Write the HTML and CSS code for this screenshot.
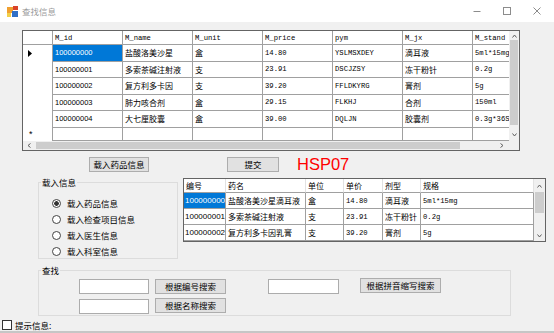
FILE: index.html
```html
<!DOCTYPE html>
<html lang="zh-CN">
<head>
    <meta charset="UTF-8">
    <title>查找信息</title>
    <link rel="stylesheet" href="styles.css">
</head>
<body>
<div class="window">
    <div class="titlebar">
        <svg class="app-icon" width="11" height="11" viewBox="0 0 11 11">
            <rect x="0" y="1" width="6" height="6" fill="#f0a030"/>
            <rect x="5" y="5" width="6" height="6" fill="#2f6fc6"/>
            <rect x="6" y="0" width="5" height="4" fill="#d9432a"/>
            <rect x="0" y="7" width="4" height="4" fill="#f2d04a"/>
        </svg>
        <span class="title">查找信息</span>
        <div class="caption">
            <span class="cap"><svg width="10" height="10" viewBox="0 0 10 10"><path d="M1.5 5.5h7" stroke="#8c8c8c"/></svg></span>
            <span class="cap"><svg width="10" height="10" viewBox="0 0 10 10"><rect x="1.5" y="1.5" width="7" height="7" fill="none" stroke="#8c8c8c"/></svg></span>
            <span class="cap"><svg width="10" height="10" viewBox="0 0 10 10"><path d="M1.5 1.5l7 7M8.5 1.5l-7 7" stroke="#8c8c8c"/></svg></span>
        </div>
    </div>

    <div class="client">
        <!-- main data grid -->
        <div class="dgv dgv-main">
            <div class="dgv-data">
                <div class="row head">
                    <div class="rh"></div>
                    <div class="c mono">M_id</div>
                    <div class="c mono">M_name</div>
                    <div class="c mono">M_unit</div>
                    <div class="c mono">M_price</div>
                    <div class="c mono">pym</div>
                    <div class="c mono">M_jx</div>
                    <div class="c mono">M_stand</div>
                </div>
                <div class="row">
                    <div class="rh"><svg class="cur" width="4" height="7" viewBox="0 0 4 7"><path d="M0 0L4 3.5L0 7z"/></svg></div>
                    <div class="c num sel">100000000</div>
                    <div class="c">盐酸洛美沙星</div>
                    <div class="c">盒</div>
                    <div class="c mono">14.80</div>
                    <div class="c mono">YSLMSXDEY</div>
                    <div class="c">滴耳液</div>
                    <div class="c mono">5ml*15mg</div>
                </div>
                <div class="row">
                    <div class="rh"></div>
                    <div class="c num">100000001</div>
                    <div class="c">多索茶碱注射液</div>
                    <div class="c">支</div>
                    <div class="c mono">23.91</div>
                    <div class="c mono">DSCJZSY</div>
                    <div class="c">冻干粉针</div>
                    <div class="c mono">0.2g</div>
                </div>
                <div class="row">
                    <div class="rh"></div>
                    <div class="c num">100000002</div>
                    <div class="c">复方利多卡因</div>
                    <div class="c">支</div>
                    <div class="c mono">39.20</div>
                    <div class="c mono">FFLDKYRG</div>
                    <div class="c">膏剂</div>
                    <div class="c mono">5g</div>
                </div>
                <div class="row">
                    <div class="rh"></div>
                    <div class="c num">100000003</div>
                    <div class="c">肺力咳合剂</div>
                    <div class="c">盒</div>
                    <div class="c mono">29.15</div>
                    <div class="c mono">FLKHJ</div>
                    <div class="c">合剂</div>
                    <div class="c mono">150ml</div>
                </div>
                <div class="row">
                    <div class="rh"></div>
                    <div class="c num">100000004</div>
                    <div class="c">大七厘胶囊</div>
                    <div class="c">盒</div>
                    <div class="c mono">39.00</div>
                    <div class="c mono">DQLJN</div>
                    <div class="c">胶囊剂</div>
                    <div class="c mono">0.3g*36S</div>
                </div>
                <div class="row new">
                    <div class="rh star">*</div>
                    <div class="c"></div>
                    <div class="c"></div>
                    <div class="c"></div>
                    <div class="c"></div>
                    <div class="c"></div>
                    <div class="c"></div>
                    <div class="c"></div>
                </div>
            </div>
            <div class="vscroll">
                <span class="arrow arrow-up"><svg width="5" height="4" viewBox="0 0 5 4"><path d="M0.5 3.5L2.5 1L4.5 3.5" fill="none" stroke="#606060"/></svg></span>
                <span class="thumb"></span>
                <span class="spacer"></span>
                <span class="arrow arrow-down"><svg width="5" height="4" viewBox="0 0 5 4"><path d="M0.5 0.5L2.5 3L4.5 0.5" fill="none" stroke="#606060"/></svg></span>
            </div>
            <div class="hscroll">
                <span class="arrow arrow-left"><svg width="4" height="5" viewBox="0 0 4 5"><path d="M3.5 0.5L1 2.5L3.5 4.5" fill="none" stroke="#606060"/></svg></span>
                <span class="thumb"></span>
                <span class="spacer"></span>
                <span class="arrow arrow-right"><svg width="4" height="5" viewBox="0 0 4 5"><path d="M0.5 0.5L3 2.5L0.5 4.5" fill="none" stroke="#606060"/></svg></span>
            </div>
            <div class="corner"></div>
        </div>

        <div class="actions">
            <button class="btn btn-load">载入药品信息</button>
            <button class="btn btn-submit">提交</button>
            <span class="brand">HSP07</span>
        </div>

        <div class="middle">
            <fieldset class="group group-load">
                <legend>载入信息</legend>
                <div class="radios">
                    <label class="radio"><input type="radio" name="load" checked>载入药品信息</label>
                    <label class="radio"><input type="radio" name="load">载入检查项目信息</label>
                    <label class="radio"><input type="radio" name="load">载入医生信息</label>
                    <label class="radio"><input type="radio" name="load">载入科室信息</label>
                </div>
            </fieldset>

            <div class="dgv dgv-sub">
                <div class="dgv-data">
                    <div class="row head">
                        <div class="c">编号</div>
                        <div class="c">药名</div>
                        <div class="c">单位</div>
                        <div class="c">单价</div>
                        <div class="c">剂型</div>
                        <div class="c">规格</div>
                    </div>
                    <div class="row">
                        <div class="c num sel">100000000</div>
                        <div class="c">盐酸洛美沙星滴耳液</div>
                        <div class="c">盒</div>
                        <div class="c mono">14.80</div>
                        <div class="c">滴耳液</div>
                        <div class="c mono">5ml*15mg</div>
                    </div>
                    <div class="row">
                        <div class="c num">100000001</div>
                        <div class="c">多索茶碱注射液</div>
                        <div class="c">支</div>
                        <div class="c mono">23.91</div>
                        <div class="c">冻干粉针</div>
                        <div class="c mono">0.2g</div>
                    </div>
                    <div class="row">
                        <div class="c num">100000002</div>
                        <div class="c">复方利多卡因乳膏</div>
                        <div class="c">支</div>
                        <div class="c mono">39.20</div>
                        <div class="c">膏剂</div>
                        <div class="c mono">5g</div>
                    </div>
                </div>
                <div class="vscroll">
                    <span class="arrow arrow-up"><svg width="5" height="4" viewBox="0 0 5 4"><path d="M0.5 3.5L2.5 1L4.5 3.5" fill="none" stroke="#606060"/></svg></span>
                    <span class="thumb"></span>
                    <span class="spacer"></span>
                    <span class="arrow arrow-down"><svg width="5" height="4" viewBox="0 0 5 4"><path d="M0.5 0.5L2.5 3L4.5 0.5" fill="none" stroke="#606060"/></svg></span>
                </div>
            </div>
        </div>

        <fieldset class="group group-search">
            <legend>查找</legend>
            <div class="search-rows">
                <div class="search-row">
                    <input type="text" class="tb">
                    <button class="btn btn-find">根据编号搜索</button>
                    <input type="text" class="tb tb-pym">
                    <button class="btn btn-pym">根据拼音缩写搜索</button>
                </div>
                <div class="search-row">
                    <input type="text" class="tb">
                    <button class="btn btn-find btn-name">根据名称搜索</button>
                </div>
            </div>
        </fieldset>

        <label class="tip"><input type="checkbox">提示信息:</label>
    </div>
</div>
</body>
</html>
```

FILE: styles.css
```css
* {
    box-sizing: border-box;
}

body {
    margin: 0;
    width: 554px;
    height: 333px;
    overflow: hidden;
    background-color: #f0f0f0;
    font-family: "Noto Sans CJK SC", "Liberation Sans", sans-serif;
    font-size: 8.5px;
    color: #000;
}

.window {
    height: 333px;
    display: flex;
    flex-direction: column;
    border-bottom: 2px solid #c6c6c6;
}

/* Title bar */
.titlebar {
    height: 22px;
    flex: none;
    background: #fff;
    display: flex;
    align-items: center;
    padding: 0 2px 0 7px;
}

.app-icon {
    display: block;
}

.title {
    margin-left: 4px;
    color: #9b9b9b;
}

.caption {
    margin-left: auto;
    display: flex;
}

.cap {
    width: 30px;
    height: 22px;
    display: flex;
    align-items: center;
    justify-content: center;
}

.client {
    flex: 1;
    display: flex;
    flex-direction: column;
    align-items: flex-start;
}

/* Data grid views */
.dgv {
    display: grid;
    background: #fff;
    border: 1px solid #646464;
}

.dgv-main {
    width: 498px;
    height: 121px;
    margin: 8px 0 0 22px;
    grid-template-columns: 1fr 10px;
    grid-template-rows: 1fr 9px;
}

.dgv-sub {
    width: 363px;
    height: 64px;
    margin-top: 2px;
    grid-template-columns: 1fr 11px;
}

.dgv-data {
    min-width: 0;
    overflow: hidden;
    display: flex;
    flex-direction: column;
}

.row {
    display: grid;
    flex: none;
}

.dgv-main .row {
    grid-template-columns: 30px repeat(7, 70px);
    height: 16.5px;
}

.dgv-sub .row {
    grid-template-columns: 42px 80px 38px 39px 38px 113px;
    height: 16px;
}

.dgv-main .head,
.dgv-sub .head {
    height: 14px;
}

.dgv-main .new {
    flex: 1;
}

.c {
    display: flex;
    align-items: center;
    padding-left: 2px;
    border-right: 1px solid #a0a0a0;
    border-bottom: 1px solid #a0a0a0;
    white-space: nowrap;
    overflow: hidden;
    font-size: 8px;
}

.dgv-sub .head .c {
    border-right-color: #e2e2e2;
}

.rh {
    display: flex;
    align-items: center;
    border-right: 1px solid #a0a0a0;
}

.head .rh {
    border-bottom: 1px solid #a0a0a0;
}

.cur {
    margin-left: 5px;
}

.star {
    padding-left: 6px;
    font-family: "Liberation Sans", sans-serif;
    font-size: 9px;
}

.mono {
    font-family: "Liberation Mono", "Noto Sans CJK SC", monospace;
    font-size: 7.2px;
}

.num {
    font-family: "Liberation Sans", sans-serif;
    font-size: 7.5px;
}

.dgv-sub .num {
    padding-left: 1px;
    font-size: 8px;
}

.sel {
    background: #0078d7;
    color: #fff;
}

/* Scroll bars */
.vscroll,
.hscroll {
    background: #f0f0f0;
    display: flex;
}

.vscroll {
    flex-direction: column;
}

.arrow {
    flex: none;
    display: flex;
    align-items: center;
    justify-content: center;
}

.arrow svg {
    display: block;
}

.thumb {
    flex: none;
    background: #cdcdcd;
}

.spacer {
    flex: 1;
}

.corner {
    background: #f0f0f0;
}

.dgv-main .arrow-up { height: 9px; }
.dgv-main .arrow-down { height: 12px; }
.dgv-main .vscroll .thumb {
    height: 85px;
    margin: 0 1px;
}

.hscroll .arrow-left { width: 12px; }
.hscroll .arrow-right { width: 14px; }
.hscroll .thumb {
    width: 424px;
    margin: 1px 0 1px 1px;
}

.dgv-sub .arrow-up { height: 13px; }
.dgv-sub .arrow-down { height: 10px; }
.dgv-sub .vscroll .thumb {
    height: 21px;
    margin: 0 1px;
}

/* Buttons */
.btn {
    height: 15px;
    padding: 0;
    background: #e1e1e1;
    border: 1px solid #adadad;
    font: inherit;
    color: #000;
    line-height: 13px;
}

.actions {
    display: flex;
    align-items: center;
    margin-top: 6px;
    height: 15px;
}

.btn-load {
    width: 60px;
    margin-left: 89px;
}

.btn-submit {
    width: 52px;
    margin-left: 78px;
}

.brand {
    margin: -1px 0 0 18px;
    font-family: "Liberation Sans", Arial, sans-serif;
    font-size: 16.5px;
    line-height: 15px;
    color: #f00;
}

/* Group boxes */
.middle {
    display: flex;
    align-items: flex-start;
    gap: 5px;
    margin: 4px 0 0 38px;
}

.group {
    margin: 0;
    padding: 0;
    min-width: 0;
    border: 1px solid #dcdcdc;
}

.group legend {
    margin-left: 2px;
    padding: 0 1px;
}

.group-load {
    width: 140px;
    height: 83px;
}

.radios {
    display: flex;
    flex-direction: column;
    padding: 7px 0 0 13px;
}

.radio {
    display: flex;
    align-items: center;
    gap: 6px;
    height: 16px;
}

.radio input {
    appearance: none;
    margin: 0;
    width: 9px;
    height: 9px;
    border: 1px solid #444;
    border-radius: 50%;
    background: #fff;
}

.radio input:checked {
    background: radial-gradient(circle, #333 0 2px, #fff 2.6px);
}

.group-search {
    width: 473px;
    height: 52px;
    margin: 5px 0 0 38px;
}

.search-rows {
    display: flex;
    flex-direction: column;
    gap: 5px;
    padding: 3px 0 0 40px;
}

.search-row {
    display: flex;
    align-items: flex-start;
}

.tb {
    width: 70px;
    height: 15px;
    margin: 0;
    padding: 0 2px;
    border: 1px solid #acacac;
    background: #fff;
    font: inherit;
}

.btn-find {
    width: 71px;
    margin-left: 6px;
}

.btn-name {
    margin-top: -1px;
}

.tb-pym {
    width: 71px;
    margin-left: 42px;
}

.btn-pym {
    width: 81px;
    margin: -1px 0 0 21px;
}

/* Tip checkbox */
.tip {
    display: flex;
    align-items: center;
    gap: 3px;
    height: 10px;
    margin: 4px 0 0 2px;
}

.tip input {
    appearance: none;
    margin: 0;
    width: 10px;
    height: 10px;
    border: 1px solid #333;
    background: #fff;
}
```
